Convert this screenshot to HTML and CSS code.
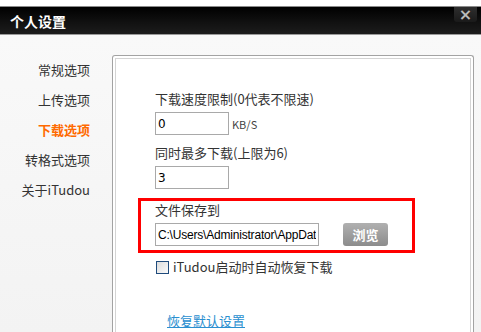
FILE: index.html
```html
<!DOCTYPE html>
<html lang="zh-CN">
<head>
    <meta charset="UTF-8">
    <title>个人设置</title>
    <link rel="stylesheet" href="styles.css">
</head>
<body>

<div class="titleBar">
    <span class="title">个人设置</span>
    <span class="closeBtn">×</span>
</div>

<div class="main">
    <div class="menu">
        <div class="menuItem">常规选项</div>
        <div class="menuItem">上传选项</div>
        <div class="menuItem active">下载选项</div>
        <div class="menuItem">转格式选项</div>
        <div class="menuItem">关于iTudou</div>
    </div>

    <div class="panel">
        <div class="panelInner">
            <div class="row">
                <div class="label">下载速度限制(0代表不限速)</div>
                <div class="inputLine">
                    <input type="text" class="field small" value="0">
                    <span class="unit">KB/S</span>
                </div>
            </div>
            <div class="row">
                <div class="label">同时最多下载(上限为6)</div>
                <div class="inputLine">
                    <input type="text" class="field small" value="3">
                </div>
            </div>
            <div class="highlight">
                <div class="label">文件保存到</div>
                <div class="inputLine">
                    <input type="text" class="field path" value="C:\Users\Administrator\AppData\Roaming">
                    <span class="browseBtn">浏览</span>
                </div>
            </div>
            <div class="checkRow">
                <span class="checkBox"></span>
                <span>iTudou启动时自动恢复下载</span>
            </div>
            <a class="resetLink" href="#">恢复默认设置</a>
        </div>
    </div>
</div>

</body>
</html>
```

FILE: styles.css
```css
body {
    margin: 0;
    width: 481px;
    height: 332px;
    overflow: hidden;
    background: #fff;
    font-family: "Noto Sans CJK SC", "DejaVu Sans", sans-serif;
    font-size: 13px;
    color: #333;
}
.titleBar {
    margin-top: 6px;
    height: 27px;
    border-top: 1px solid #8a8a8a;
    border-bottom: 1px solid #9a9a9a;
    background: linear-gradient(#000, #121212 60%, #1c1c1c);
    display: flex;
    align-items: flex-start;
    justify-content: space-between;
}
.title {
    color: #fff;
    font-weight: bold;
    font-size: 14px;
    line-height: 29px;
    padding-left: 10px;
}
.closeBtn {
    width: 23px;
    height: 15px;
    margin-right: 4px;
    background: linear-gradient(#2e2e2e, #1a1a1a);
    border-radius: 0 0 3px 3px;
    color: #bbb;
    font-family: "DejaVu Sans", sans-serif;
    font-weight: bold;
    font-size: 16px;
    line-height: 15px;
    text-align: center;
}
.main {
    display: flex;
    height: 297px;
    overflow: hidden;
    background: linear-gradient(#f9f9f9, #f3f3f3);
}
.menu {
    width: 90px;
    padding-top: 20px;
    padding-right: 22px;
    text-align: right;
}
.menuItem {
    height: 30px;
    line-height: 30px;
    color: #333;
}
.menuItem.active {
    color: #ff6a00;
    font-weight: bold;
}
.panel {
    box-sizing: border-box;
    margin-top: 20px;
    width: 362px;
    height: 277px;
    border: 1px solid #a3a3a3;
    border-bottom: none;
    border-radius: 3px 3px 0 0;
    padding: 2px 2px 0 2px;
    background: #fff;
}
.panelInner {
    box-sizing: border-box;
    height: 100%;
    border: 1px solid #d4d4d4;
    border-bottom: none;
    padding: 31px 0 0 22px;
}
.row {
    padding-left: 17px;
    margin-bottom: 9px;
}
.label {
    line-height: 18px;
}
.inputLine {
    display: flex;
    align-items: center;
    margin-top: 4px;
}
.field {
    box-sizing: border-box;
    height: 23px;
    border: 1px solid #a9a9a9;
    padding: 0 2px;
    font-family: "DejaVu Sans", sans-serif;
    font-size: 12px;
    color: #000;
    outline: none;
}
.small {
    width: 74px;
}
.path {
    width: 164px;
    font-family: "Liberation Sans", sans-serif;
    font-size: 12px;
    letter-spacing: -0.2px;
}
.unit {
    margin-left: 3px;
    font-size: 11px;
    color: #444;
}
.highlight {
    width: 257px;
    border: 3px solid #f00;
    padding: 0 0 4px 14px;
}
.browseBtn {
    margin-left: 24px;
    width: 45px;
    height: 23px;
    border-radius: 3px;
    background: linear-gradient(#b0b0b0, #8c8c8c);
    color: #fff;
    font-weight: bold;
    text-align: center;
    line-height: 23px;
}
.checkRow {
    display: flex;
    align-items: center;
    gap: 4px;
    padding-left: 18px;
    margin-top: 5px;
    line-height: 18px;
}
.checkBox {
    box-sizing: border-box;
    width: 13px;
    height: 13px;
    border: 1px solid #1f4b7c;
    background: linear-gradient(135deg, #dcdcdc, #fafafa);
}
.resetLink {
    display: inline-block;
    margin-top: 35px;
    margin-left: 29px;
    color: #2a8fd0;
    text-decoration: underline;
}
```
